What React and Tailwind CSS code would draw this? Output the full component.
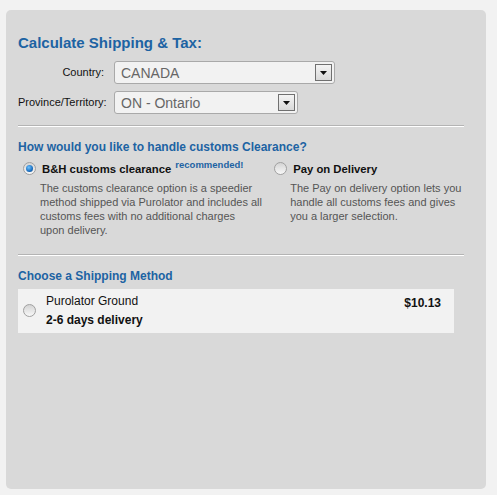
import React from "react";

function Radio({ checked }) {
  return (
    <span className="relative inline-block w-[13px] h-[13px] rounded-full border border-[#a0a0a0] bg-[linear-gradient(#d4d4d4,#f8f8f8)] shrink-0">
      {checked && (
        <span className="absolute left-[2px] top-[2px] w-[7px] h-[7px] rounded-full bg-[radial-gradient(circle_at_40%_35%,#6fc3ff,#1b6fc0_60%,#0d3f7a)]" />
      )}
    </span>
  );
}

function Select({ value, width }) {
  return (
    <div className={`flex items-center justify-between h-[23px] rounded-[3px] border border-[#a9a9a9] bg-[#f2f2f2] pl-[6px] pr-[2px] ${width}`}>
      <span className="text-[14px] text-[#666] leading-none">{value}</span>
      <span className="flex items-center justify-center w-[17px] h-[17px] border border-[#707070] bg-[linear-gradient(#f4f4f4,#d9d9d9)]">
        <svg width="7" height="4" viewBox="0 0 7 4"><path d="M0 0h7L3.5 4z" fill="#111" /></svg>
      </span>
    </div>
  );
}

function Divider() {
  return <div className="h-[2px] border-t border-[#b4b4b4] border-b border-b-white" />;
}

export default function App() {
  return (
    <div className="w-[497px] h-[495px] bg-[#f2f2f2] pt-[10px] pl-[6px] font-['Liberation_Sans',Arial,sans-serif]">
      <div className="w-[480px] h-[479px] rounded-[5px] bg-[#d9d9d9] pl-[12px] pr-[22px] pt-[23px]">
        <h1 className="text-[15px] font-bold text-[#1d63a3] leading-[20px]">Calculate Shipping &amp; Tax:</h1>
        <div className="mt-[8px] flex flex-col gap-[7px]">
          <div className="flex items-center">
            <span className="w-[86px] text-right text-[11px] text-[#111]">Country:</span>
            <span className="ml-[10px]"><Select value="CANADA" width="w-[221px]" /></span>
          </div>
          <div className="flex items-center">
            <span className="w-[88px] text-right text-[11px] text-[#111]">Province/Territory:</span>
            <span className="ml-[8px]"><Select value="ON - Ontario" width="w-[184px]" /></span>
          </div>
        </div>
        <div className="mt-[11px]"><Divider /></div>
        <h2 className="mt-[13px] text-[12px] font-bold text-[#1d63a3] leading-[15px]">How would you like to handle customs Clearance?</h2>
        <div className="mt-[5px] flex">
          <div className="w-[259px] pl-[5px]">
            <div className="flex items-center">
              <Radio checked />
              <span className="ml-[6px] mt-[1px] text-[11.3px] font-bold text-[#111]">B&amp;H customs clearance</span>
              <span className="ml-[4px] -mt-[7px] text-[9.5px] font-bold text-[#1d63a3]">recommended!</span>
            </div>
            <p className="mt-[3px] pl-[17px] text-[11px] leading-[14px] text-[#555] whitespace-nowrap">
              The customs clearance option is a speedier<br />
              method shipped via Purolator and includes all<br />
              customs fees with no additional charges<br />
              upon delivery.
            </p>
          </div>
          <div className="w-[192px]">
            <div className="flex items-center">
              <Radio />
              <span className="ml-[6px] mt-[1px] text-[11.3px] font-bold text-[#111]">Pay on Delivery</span>
            </div>
            <p className="mt-[3px] pl-[16px] text-[11px] leading-[14px] text-[#555] whitespace-nowrap">
              The Pay on delivery option lets you<br />
              handle all customs fees and gives<br />
              you a larger selection.
            </p>
          </div>
        </div>
        <div className="mt-[17px]"><Divider /></div>
        <h2 className="mt-[13px] text-[12px] font-bold text-[#1d63a3] leading-[15px]">Choose a Shipping Method</h2>
        <div className="mt-[5px] w-[436px] h-[44px] bg-[#f2f2f2] flex items-center pl-[5px] pr-[13px]">
          <Radio />
          <div className="ml-[10px] flex-1 flex flex-col gap-[5px]">
            <span className="text-[12px] text-[#111] leading-[14px]">Purolator Ground</span>
            <span className="text-[12px] font-bold text-[#111] leading-[14px]">2-6 days delivery</span>
          </div>
          <span className="self-start mt-[5px] text-[12px] font-bold text-[#111]">$10.13</span>
        </div>
      </div>
    </div>
  );
}
